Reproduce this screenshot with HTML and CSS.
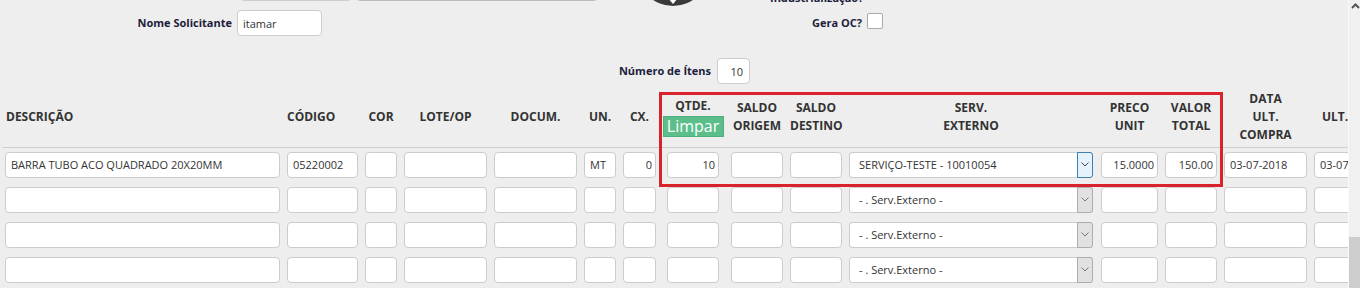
FILE: index.html
```html
<!DOCTYPE html>
<html>
<head>
<meta charset="utf-8">
<title>Requisição de Materiais</title>
<link rel="stylesheet" href="styles.css">
</head>
<body>
<div class="page">
    <div class="top">
        <div class="line line-a">
            <input type="text" class="fld fld-a">
            <input type="text" class="fld fld-b" disabled>
            <div class="logo">
                <svg width="72" height="72" viewBox="0 0 72 72">
                    <circle cx="36" cy="36" r="36" fill="#3a3a3a"/>
                    <path d="M26 58 L46 58 L36 70 Z" fill="#fff"/>
                    <path d="M31 60 L41 60 L36 66 Z" fill="#3a3a3a"/>
                </svg>
            </div>
            <label class="lbl lbl-ind">Industrialização?</label>
        </div>
        <div class="line line-b">
            <label class="lbl lbl-nome">Nome Solicitante</label>
            <input type="text" class="fld fld-nome" value="itamar">
            <label class="lbl lbl-oc">Gera OC?</label>
            <input type="checkbox" class="chk">
        </div>
        <div class="line line-c">
            <label class="lbl lbl-itens">Número de Ítens</label>
            <input type="text" class="fld fld-itens num" value="10">
        </div>
    </div>

    <table class="grid">
        <colgroup>
            <col style="width:282px"><col style="width:78px"><col style="width:39px">
            <col style="width:90px"><col style="width:90px"><col style="width:39px">
            <col style="width:44px"><col style="width:64px"><col style="width:59px">
            <col style="width:59px"><col style="width:252px"><col style="width:64px">
            <col style="width:59px"><col style="width:90px"><col style="width:90px">
        </colgroup>
        <thead>
            <tr>
                <th>DESCRIÇÃO</th>
                <th>CÓDIGO</th>
                <th>COR</th>
                <th>LOTE/OP</th>
                <th>DOCUM.</th>
                <th>UN.</th>
                <th>CX.</th>
                <th><div class="qtde">QTDE.<button type="button" class="btn-limpar">Limpar</button></div></th>
                <th>SALDO<br>ORIGEM</th>
                <th>SALDO<br>DESTINO</th>
                <th>SERV.<br>EXTERNO</th>
                <th>PRECO<br>UNIT</th>
                <th>VALOR<br>TOTAL</th>
                <th>DATA<br>ULT.<br>COMPRA</th>
                <th>ULT. PREÇO</th>
            </tr>
        </thead>
        <tbody>
            <tr>
                <td><input type="text" class="fld" value="BARRA TUBO ACO QUADRADO 20X20MM"></td>
                <td><input type="text" class="fld" value="05220002"></td>
                <td><input type="text" class="fld"></td>
                <td><input type="text" class="fld"></td>
                <td><input type="text" class="fld"></td>
                <td><input type="text" class="fld" value="MT"></td>
                <td><input type="text" class="fld num" value="0"></td>
                <td><input type="text" class="fld num" value="10"></td>
                <td><input type="text" class="fld"></td>
                <td><input type="text" class="fld"></td>
                <td><div class="sel focus"><span class="sel-text">SERVIÇO-TESTE - 10010054</span><span class="caret"><svg width="8" height="5" viewBox="0 0 8 5"><polyline points="0.5,0.5 4,4 7.5,0.5" fill="none" stroke="#444"/></svg></span></div></td>
                <td><input type="text" class="fld num" value="15.0000"></td>
                <td><input type="text" class="fld num" value="150.00"></td>
                <td><input type="text" class="fld" value="03-07-2018"></td>
                <td><input type="text" class="fld" value="03-07-2018"></td>
            </tr>
            <tr>
                <td><input type="text" class="fld"></td>
                <td><input type="text" class="fld"></td>
                <td><input type="text" class="fld"></td>
                <td><input type="text" class="fld"></td>
                <td><input type="text" class="fld"></td>
                <td><input type="text" class="fld"></td>
                <td><input type="text" class="fld"></td>
                <td><input type="text" class="fld"></td>
                <td><input type="text" class="fld"></td>
                <td><input type="text" class="fld"></td>
                <td><div class="sel"><span class="sel-text">- . Serv.Externo -</span><span class="caret"><svg width="8" height="5" viewBox="0 0 8 5"><polyline points="0.5,0.5 4,4 7.5,0.5" fill="none" stroke="#777"/></svg></span></div></td>
                <td><input type="text" class="fld"></td>
                <td><input type="text" class="fld"></td>
                <td><input type="text" class="fld"></td>
                <td><input type="text" class="fld"></td>
            </tr>
            <tr>
                <td><input type="text" class="fld"></td>
                <td><input type="text" class="fld"></td>
                <td><input type="text" class="fld"></td>
                <td><input type="text" class="fld"></td>
                <td><input type="text" class="fld"></td>
                <td><input type="text" class="fld"></td>
                <td><input type="text" class="fld"></td>
                <td><input type="text" class="fld"></td>
                <td><input type="text" class="fld"></td>
                <td><input type="text" class="fld"></td>
                <td><div class="sel"><span class="sel-text">- . Serv.Externo -</span><span class="caret"><svg width="8" height="5" viewBox="0 0 8 5"><polyline points="0.5,0.5 4,4 7.5,0.5" fill="none" stroke="#777"/></svg></span></div></td>
                <td><input type="text" class="fld"></td>
                <td><input type="text" class="fld"></td>
                <td><input type="text" class="fld"></td>
                <td><input type="text" class="fld"></td>
            </tr>
            <tr>
                <td><input type="text" class="fld"></td>
                <td><input type="text" class="fld"></td>
                <td><input type="text" class="fld"></td>
                <td><input type="text" class="fld"></td>
                <td><input type="text" class="fld"></td>
                <td><input type="text" class="fld"></td>
                <td><input type="text" class="fld"></td>
                <td><input type="text" class="fld"></td>
                <td><input type="text" class="fld"></td>
                <td><input type="text" class="fld"></td>
                <td><div class="sel"><span class="sel-text">- . Serv.Externo -</span><span class="caret"><svg width="8" height="5" viewBox="0 0 8 5"><polyline points="0.5,0.5 4,4 7.5,0.5" fill="none" stroke="#777"/></svg></span></div></td>
                <td><input type="text" class="fld"></td>
                <td><input type="text" class="fld"></td>
                <td><input type="text" class="fld"></td>
                <td><input type="text" class="fld"></td>
            </tr>
        </tbody>
    </table>

    <!-- marcação em vermelho sobre as colunas -->
    <div class="mark"></div>
</div>
<div class="scroll">
    <div class="scroll-up"><svg width="9" height="6" viewBox="0 0 9 6"><polyline points="1,5 4.5,1.5 8,5" fill="none" stroke="#555" stroke-width="2"/></svg></div>
    <div class="scroll-thumb"></div>
</div>
</body>
</html>
```

FILE: styles.css
```css
body {
    margin: 0;
    height: 288px;
    overflow: hidden;
    display: flex;
    background-color: #eeeeee;
    font-family: "Open Sans", "DejaVu Sans", sans-serif;
}

.page {
    width: 1348px;
    flex: none;
    overflow: hidden;
    position: relative;
}

/* cabeçalho do formulário */
.line {
    display: flex;
}
.line-a {
    height: 27px;
    margin-top: -26px;
    padding-left: 240px;
    align-items: flex-end;
}
.line-b {
    height: 26px;
    margin-top: 9px;
    align-items: center;
}
.line-c {
    height: 26px;
    margin-top: 22px;
    align-items: center;
}

.lbl {
    font-size: 11px;
    font-weight: bold;
    line-height: 16px;
    color: #1d1d3b;
    flex: none;
}
.lbl-ind {
    margin-left: 61px;
    margin-bottom: -5px;
}
.lbl-nome {
    width: 232px;
    text-align: right;
}
.lbl-oc {
    width: 540px;
    text-align: right;
}
.lbl-itens {
    width: 711px;
    text-align: right;
}

.fld {
    box-sizing: border-box;
    height: 26px;
    margin: 0;
    padding: 0 5px;
    border: 1px solid #cccccc;
    border-radius: 4px;
    background-color: #fff;
    font-family: "Open Sans", "DejaVu Sans", sans-serif;
    font-size: 11px;
    color: #333;
    flex: none;
}
.fld.num {
    text-align: right;
    padding-right: 3px;
}
.fld-a {
    width: 112px;
}
.fld-b {
    width: 242px;
    margin-left: 4px;
    background-color: #e4e4e4;
    border-color: #bbbbbb;
}
.fld-nome {
    width: 85px;
    margin-left: 5px;
}
.fld-itens {
    width: 33px;
    margin-left: 6px;
}
.fld-itens.num {
    padding-right: 6px;
    color: #333;
}

.logo {
    width: 72px;
    height: 72px;
    margin-left: 39px;
    margin-bottom: -5px;
    flex: none;
}
.logo svg {
    display: block;
}

.chk {
    appearance: none;
    width: 16px;
    height: 16px;
    margin: 0 0 4px 5px;
    border: 1px solid #a9a9a9;
    border-radius: 2px;
    background-color: #fff;
    box-sizing: border-box;
}

/* grade de itens */
.grid {
    margin: 4px 0 0 2px;
    width: 1399px;
    table-layout: fixed;
    border-collapse: collapse;
}
.grid th {
    height: 59px;
    padding: 0 4px 0 3px;
    border-bottom: 1px solid #cfcfcf;
    font-size: 12px;
    font-weight: bold;
    line-height: 18px;
    color: #333;
    text-align: center;
    vertical-align: middle;
    white-space: nowrap;
    box-sizing: border-box;
}
.grid th:nth-child(1) {
    text-align: left;
    padding-left: 4px;
}
.grid th:nth-child(2) {
    text-align: left;
}
.grid th:nth-child(15) {
    text-align: left;
    padding-left: 11px;
}
.grid td {
    padding: 4px 4px 5px 3px;
}
.grid th:nth-child(7), .grid td:nth-child(7) {
    padding-right: 8px;
}
.grid th:nth-child(8), .grid td:nth-child(8) {
    padding-right: 9px;
}
.grid th:nth-child(11), .grid td:nth-child(11) {
    padding-right: 5px;
}
.grid .fld {
    width: 100%;
    display: block;
}

.qtde {
    display: flex;
    flex-direction: column;
    align-items: center;
}
.btn-limpar {
    width: 61px;
    height: 21px;
    margin-top: 1px;
    padding: 0;
    border: 1px solid #4faf7e;
    background-color: #5cbf8b;
    color: #fff;
    font-family: "Open Sans", "DejaVu Sans", sans-serif;
    font-size: 16px;
    line-height: 19px;
    flex: none;
}

.sel {
    display: flex;
    align-items: center;
    box-sizing: border-box;
    height: 26px;
    border: 1px solid #cccccc;
    border-radius: 3px;
    background-color: #fff;
    font-size: 11px;
    color: #333;
}
.sel-text {
    flex: 1;
    padding-left: 9px;
    white-space: nowrap;
}
.caret {
    align-self: stretch;
    width: 16px;
    margin: -1px -1px -1px 0;
    display: flex;
    align-items: center;
    justify-content: center;
    box-sizing: border-box;
    border: 1px solid #adadad;
    border-radius: 0 3px 3px 0;
    background-color: #e1e1e1;
}
.sel.focus .caret {
    border-color: #3c7fb1;
    background-color: #e5f1fb;
}

.mark {
    position: absolute;
    left: 659px;
    top: 92px;
    width: 564px;
    height: 95px;
    box-sizing: border-box;
    border: 3px solid #d9232b;
}

/* barra de rolagem */
.scroll {
    width: 12px;
    flex: none;
    box-sizing: border-box;
    border-left: 1px solid #fafafa;
    background-color: #f0f0f0;
}
.scroll-up {
    height: 12px;
    padding: 3px 0 0 2px;
    box-sizing: border-box;
}
.scroll-up svg {
    display: block;
}
.scroll-thumb {
    margin-top: 225px;
    height: 60px;
    background-color: #cdcdcd;
}
```
